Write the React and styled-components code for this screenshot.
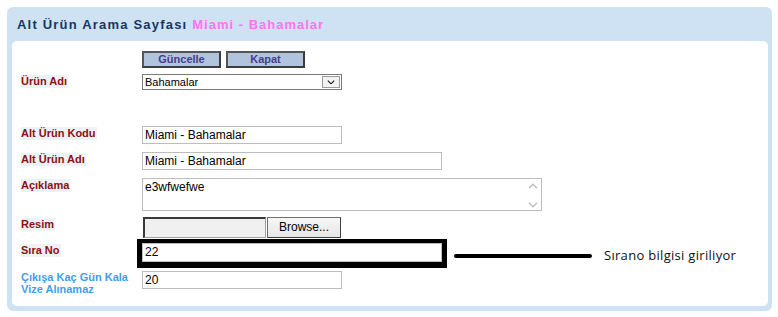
import React from "react";
import styled, { createGlobalStyle } from "styled-components";

const GlobalStyle = createGlobalStyle`
  body {
    margin: 0;
    background: #ffffff;
    font-family: "Liberation Sans", Arial, sans-serif;
  }
`;

const Page = styled.div`
  padding: 7px 6px 10px 7px;
`;

const Panel = styled.div`
  width: 765px;
  background: #cfe2f3;
  border-radius: 6px;
  padding: 0 4px 5px 5px;
  box-sizing: border-box;
`;

const Title = styled.h1`
  margin: 0;
  height: 34px;
  padding: 1px 0 0 5px;
  box-sizing: border-box;
  line-height: 33px;
  font-size: 13px;
  font-weight: 700;
  letter-spacing: 1.2px;
  color: #17375e;
`;

const Highlight = styled.span`
  color: #ff73f2;
  letter-spacing: 1px;
`;

const Body = styled.div`
  background: #ffffff;
  border-radius: 5px;
  padding: 10px 0 11px 9px;
`;

const Row = styled.div`
  display: grid;
  grid-template-columns: 121px auto;
  align-items: start;
  margin-top: ${({ $gap }) => $gap || 0}px;
`;

const Label = styled.span`
  justify-self: start;
  margin-top: ${({ $offset }) => ($offset === undefined ? 1 : $offset)}px;
  padding-right: 1px;
  font-size: 11px;
  line-height: ${({ $info }) => ($info ? 12 : 13)}px;
  font-weight: 700;
  color: ${({ $info }) => ($info ? "#3f9ef0" : "#8b1010")};
  background: ${({ $info }) => ($info ? "transparent" : "#edf2f7")};
`;

const Cell = styled.div`
  display: flex;
  align-items: flex-start;
`;

const Buttons = styled.div`
  display: flex;
  gap: 5px;
`;

const Button = styled.button`
  width: 79px;
  height: 17px;
  padding: 0;
  border: 2px solid #3c3c3c;
  border-top-color: #555;
  border-left-color: #555;
  background: #b0c4de;
  color: #483d8b;
  font-family: "Liberation Sans", Arial, sans-serif;
  font-size: 11px;
  font-weight: 700;
  line-height: 13px;
`;

const Select = styled.div`
  width: 200px;
  height: 16px;
  box-sizing: border-box;
  border: 1px solid #7a7a7a;
  display: flex;
  align-items: center;
  justify-content: space-between;
  font-size: 11px;
  color: #000;
  padding: 0 1px 0 2px;
`;

const SelectArrow = styled.span`
  width: 18px;
  height: 12px;
  box-sizing: border-box;
  border: 1px solid #9a9a9a;
  background: #f2f2f2;
  display: flex;
  align-items: center;
  justify-content: center;
`;

const Input = styled.div`
  width: ${({ $w }) => $w}px;
  height: ${({ $h }) => $h || 18}px;
  box-sizing: border-box;
  border: 1px solid #bdbdbd;
  padding: 0 2px;
  font-size: 12px;
  line-height: ${({ $h }) => ($h || 18) - 2}px;
  color: #000;
  white-space: nowrap;
`;

const TextArea = styled.div`
  width: 400px;
  height: 33px;
  box-sizing: border-box;
  border: 1px solid #bdbdbd;
  display: flex;
  justify-content: space-between;
  font-size: 12px;
  line-height: 14px;
  padding: 1px 0 0 2px;
`;

const Scroller = styled.div`
  width: 17px;
  display: flex;
  flex-direction: column;
  justify-content: space-between;
  align-items: center;
  padding: 3px 0 2px;
`;

const FileField = styled.div`
  width: 123px;
  height: 21px;
  box-sizing: border-box;
  background: #f0f0f0;
  border: 1px solid #a0a0a0;
  border-top: 2px solid #3a3a3a;
  border-left: 2px solid #3a3a3a;
  margin-left: 1px;
`;

const BrowseButton = styled.div`
  width: 74px;
  height: 21px;
  box-sizing: border-box;
  margin-left: 1px;
  border: 1px solid #707070;
  border-bottom-color: #404040;
  border-right-color: #404040;
  background: linear-gradient(#f6f6f6, #e6e6e6);
  font-size: 12px;
  line-height: 19px;
  text-align: center;
  color: #000;
`;

const Marked = styled.span`
  display: inline-block;
  border: 5px solid #000;
  border-top-width: 4px;
  border-bottom-width: 6px;
  margin: -4px 0 -6px -5px;
  background: #fff;
`;

const Pointer = styled.span`
  width: 138px;
  height: 4px;
  border-radius: 2px;
  background: #000;
  margin: 11px 0 0 7px;
`;

const Note = styled.span`
  margin: 3px 0 0 12px;
  font-family: "Open Sans", "Noto Sans", sans-serif;
  font-size: 13px;
  letter-spacing: 0.3px;
  line-height: 18px;
  color: #111;
`;

const Chevron = ({ up, color, size = 10 }) => (
  <svg width={size} height={size * 0.6} viewBox="0 0 10 6">
    <path
      d={up ? "M1 5.2 L5 1.2 L9 5.2" : "M1 0.8 L5 4.8 L9 0.8"}
      fill="none"
      stroke={color}
      strokeWidth="1.3"
    />
  </svg>
);

export default function App() {
  return (
    <Page>
      <GlobalStyle />
      <Panel>
        <Title>
          Alt Ürün Arama Sayfası <Highlight>Miami - Bahamalar</Highlight>
        </Title>
        <Body>
          <Row>
            <span />
            <Buttons>
              <Button>Güncelle</Button>
              <Button>Kapat</Button>
            </Buttons>
          </Row>
          <Row $gap={6}>
            <Label $offset={1}>Ürün Adı</Label>
            <Select>
              Bahamalar
              <SelectArrow>
                <Chevron color="#111" size={8} />
              </SelectArrow>
            </Select>
          </Row>
          <Row $gap={36}>
            <Label>Alt Ürün Kodu</Label>
            <Input $w={200}>Miami - Bahamalar</Input>
          </Row>
          <Row $gap={8}>
            <Label>Alt Ürün Adı</Label>
            <Input $w={300}>Miami - Bahamalar</Input>
          </Row>
          <Row $gap={8}>
            <Label>Açıklama</Label>
            <TextArea>
              e3wfwefwe
              <Scroller>
                <Chevron up color="#bdbdbd" />
                <Chevron color="#bdbdbd" />
              </Scroller>
            </TextArea>
          </Row>
          <Row $gap={6}>
            <Label>Resim</Label>
            <Cell>
              <FileField />
              <BrowseButton>Browse...</BrowseButton>
            </Cell>
          </Row>
          <Row $gap={5}>
            <Label $offset={1}>Sıra No</Label>
            <Cell>
              <Marked>
                <Input $w={300} $h={19}>22</Input>
              </Marked>
              <Pointer />
              <Note>Sırano bilgisi giriliyor</Note>
            </Cell>
          </Row>
          <Row $gap={7}>
            <Label $info $offset={0}>
              Çıkışa Kaç Gün Kala
              <br />
              Vize Alınamaz
            </Label>
            <Input $w={200}>20</Input>
          </Row>
        </Body>
      </Panel>
    </Page>
  );
}
